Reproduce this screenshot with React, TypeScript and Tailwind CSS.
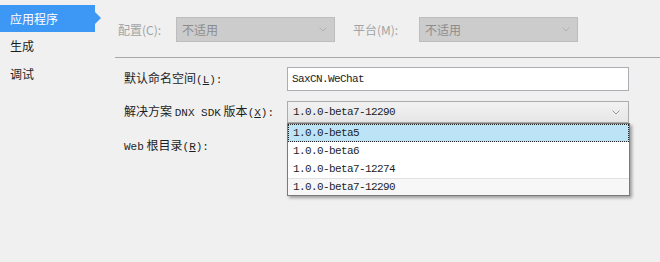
import React from "react";

const cjk = { fontFamily: '"Noto Sans CJK SC", "Noto Sans", sans-serif' };
const mono = { fontFamily: '"Liberation Mono", "Noto Sans CJK SC", monospace' };

function Chevron({ color = "#9a9a9a" }: { color?: string }) {
  return (
    <svg width="8" height="5" viewBox="0 0 8 5" className="shrink-0">
      <path d="M0.5 0.5 L4 4 L7.5 0.5" fill="none" stroke={color} strokeWidth="1" />
    </svg>
  );
}

function DisabledSelect() {
  return (
    <div className="flex h-[25px] w-[159px] items-center justify-between border border-[#bdbdbd] bg-[#cccccc] pl-[5px] pr-[7px] text-[12px] text-[#8c8c8c]">
      <span>不适用</span>
      <Chevron color="#b0b0b0" />
    </div>
  );
}

function Hot({ k }: { k: string }) {
  return (
    <span style={mono} className="text-[11px]">
      (<span className="underline">{k}</span>):
    </span>
  );
}

const versions = ["1.0.0-beta5", "1.0.0-beta6", "1.0.0-beta7-12274", "1.0.0-beta7-12290"];

export default function App() {
  return (
    <div style={cjk} className="flex h-[262px] w-[660px] overflow-hidden bg-[#f0f0f0] text-[#1e1e1e]">
      {/* sidebar */}
      <div className="w-[101px] shrink-0 pt-[5px] text-[12px]">
        <div className="relative flex h-[27px] w-[95px] items-center bg-[#3d97f5] pl-[10px] text-white">
          应用程序
          <div className="absolute left-[95px] top-[7px] h-0 w-0 border-y-[6px] border-l-[6px] border-y-transparent border-l-[#3d97f5]" />
        </div>
        <div className="flex h-[28px] items-center pl-[10px]">生成</div>
        <div className="flex h-[28px] items-center pl-[10px]">调试</div>
      </div>

      {/* main */}
      <div className="flex flex-1 flex-col pl-[14px] pt-[17px]">
        <div className="flex items-center pl-[3px] text-[12px] text-[#a3a3a3]">
          <span className="w-[58px]">配置(C):</span>
          <DisabledSelect />
          <span className="ml-[18px] w-[66px]">平台(M):</span>
          <DisabledSelect />
        </div>

        <div className="mt-[15px] h-px bg-[#a8a8a8]" />

        <div className="flex flex-col pl-[9px] pt-[9px] text-[12px]">
          <div className="flex h-[24px] items-center">
            <span className="w-[163px]">
              默认命名空间<Hot k="L" />
            </span>
            <div className="flex h-[24px] w-[342px] items-center border border-[#abadb3] bg-white pl-[4px]">
              <span style={mono} className="text-[11px] tracking-[-0.6px]">SaxCN.WeChat</span>
            </div>
          </div>

          <div className="mt-[10px] flex h-[22px] items-center">
            <span className="w-[163px]">
              解决方案 <span style={mono} className="text-[11px]">DNX SDK</span> 版本<Hot k="X" />
            </span>
            <div className="relative h-[22px] w-[342px]">
              <div className="flex h-[22px] items-center justify-between border border-[#acacac] bg-gradient-to-b from-[#f2f2f2] to-[#e6e6e6] pl-[5px] pr-[8px]">
                <span style={mono} className="text-[11px] tracking-[-0.6px]">1.0.0-beta7-12290</span>
                <Chevron />
              </div>
              <div className="absolute left-0 top-[22px] z-10 w-[343px] border border-[#7a7a7a] bg-white shadow-[2px_2px_3px_rgba(0,0,0,0.35)]">
                {versions.map((v, i) => (
                  <div
                    key={v}
                    className={
                      i === 0
                        ? "flex h-[18px] items-center border border-dotted border-[#222] bg-[#bde4f6] pl-[4px]"
                        : i === 3
                          ? "flex h-[17px] items-center border-t border-[#e2e2e2] bg-[#f7f7f7] pl-[5px]"
                          : "flex h-[18px] items-center pl-[5px]"
                    }
                  >
                    <span style={mono} className="text-[11px] tracking-[-0.6px]">{v}</span>
                  </div>
                ))}
              </div>
            </div>
          </div>

          <div className="mt-[12px] flex h-[22px] items-center">
            <span>
              <span style={mono} className="text-[11px]">Web</span> 根目录<Hot k="R" />
            </span>
          </div>
        </div>
      </div>
    </div>
  );
}
